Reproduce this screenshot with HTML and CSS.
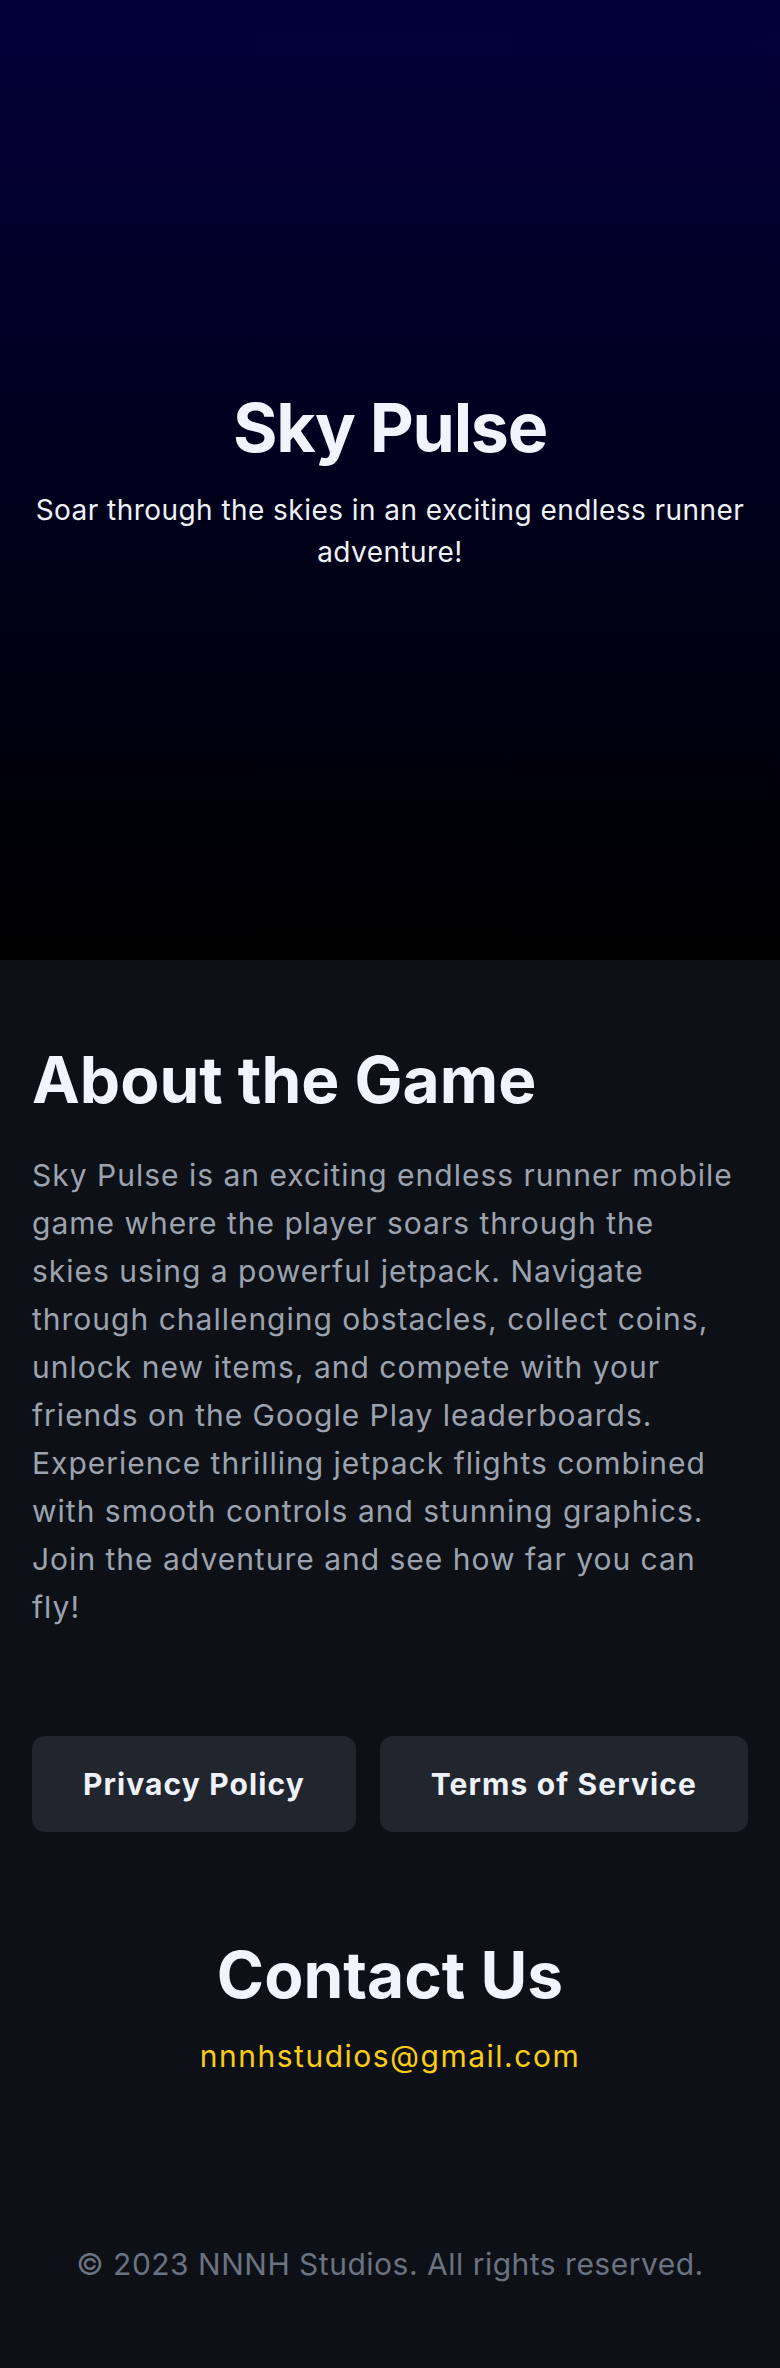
FILE: index.html
```html
<!DOCTYPE html>
<html lang="en">
<head>
<meta charset="utf-8">
<title>Sky Pulse</title>
<link rel="stylesheet" href="styles.css">
</head>
<body>
<header class="hero">
  <h1 class="hero-title">Sky Pulse</h1>
  <p class="hero-sub">Soar through the skies in an exciting endless runner adventure!</p>
</header>
<main class="main">
  <section class="about">
    <h2 class="section-title">About the Game</h2>
    <p class="about-text">Sky Pulse is an exciting endless runner mobile game where the player soars through the skies using a powerful jetpack. Navigate through challenging obstacles, collect coins, unlock new items, and compete with your friends on the Google Play leaderboards. Experience thrilling jetpack flights combined with smooth controls and stunning graphics. Join the adventure and see how far you can fly!</p>
  </section>
  <nav class="links">
    <a class="btn" href="#">Privacy Policy</a>
    <a class="btn" href="#">Terms of Service</a>
  </nav>
  <section class="contact">
    <h2 class="section-title center">Contact Us</h2>
    <a class="email" href="#">nnnhstudios@gmail.com</a>
  </section>
</main>
<footer class="footer">
  <p>© 2023 NNNH Studios. All rights reserved.</p>
</footer>
</body>
</html>
```
FILE: styles.css
```css
* { box-sizing: border-box; }
html, body { margin: 0; padding: 0; }
body {
  background: #0d1117;
  font-family: Inter, "Noto Sans", sans-serif;
  color: #f0f4fc;
}
.hero {
  height: 960px;
  background: linear-gradient(to bottom, #020039 0%, #000000 100%);
  display: flex;
  flex-direction: column;
  align-items: center;
  justify-content: center;
  text-align: center;
  padding: 0 32px;
}
.hero-title {
  margin: 0;
  font-size: 68px;
  font-weight: 700;
  line-height: 1.2;
  letter-spacing: -1.2px;
  color: #f0f4fc;
}
.hero-sub {
  margin: 21px 0 0;
  font-size: 28px;
  line-height: 42px;
  letter-spacing: 0.45px;
  color: #eef2f8;
}
.main {
  padding: 82px 32px 0;
}
.section-title {
  margin: 0;
  font-size: 64px;
  font-weight: 700;
  line-height: 1.2;
  letter-spacing: 0;
  color: #f0f4fc;
}
.center { text-align: center; }
.about-text {
  margin: 32px 0 0;
  max-width: 706px;
  font-size: 30px;
  line-height: 48px;
  letter-spacing: 1px;
  color: #9ca3af;
}
.links {
  display: flex;
  gap: 24px;
  margin-top: 105px;
}
.btn {
  flex: 1 1 auto;
  display: block;
  text-align: center;
  background: #21252d;
  color: #eef2f8;
  border-radius: 13px;
  padding: 24px 16px;
  font-size: 30px;
  font-weight: 700;
  line-height: 48px;
  letter-spacing: 1.1px;
  text-decoration: none;
}
.contact {
  margin-top: 105px;
  display: flex;
  flex-direction: column;
  align-items: center;
}
.email {
  margin-top: 18px;
  font-size: 30px;
  line-height: 48px;
  letter-spacing: 1.5px;
  color: #facc15;
  text-decoration: none;
}
.footer {
  padding: 160px 32px 81px;
  text-align: center;
}
.footer p {
  margin: 0;
  font-size: 30px;
  line-height: 48px;
  letter-spacing: 0.5px;
  color: #6b7280;
}
```
